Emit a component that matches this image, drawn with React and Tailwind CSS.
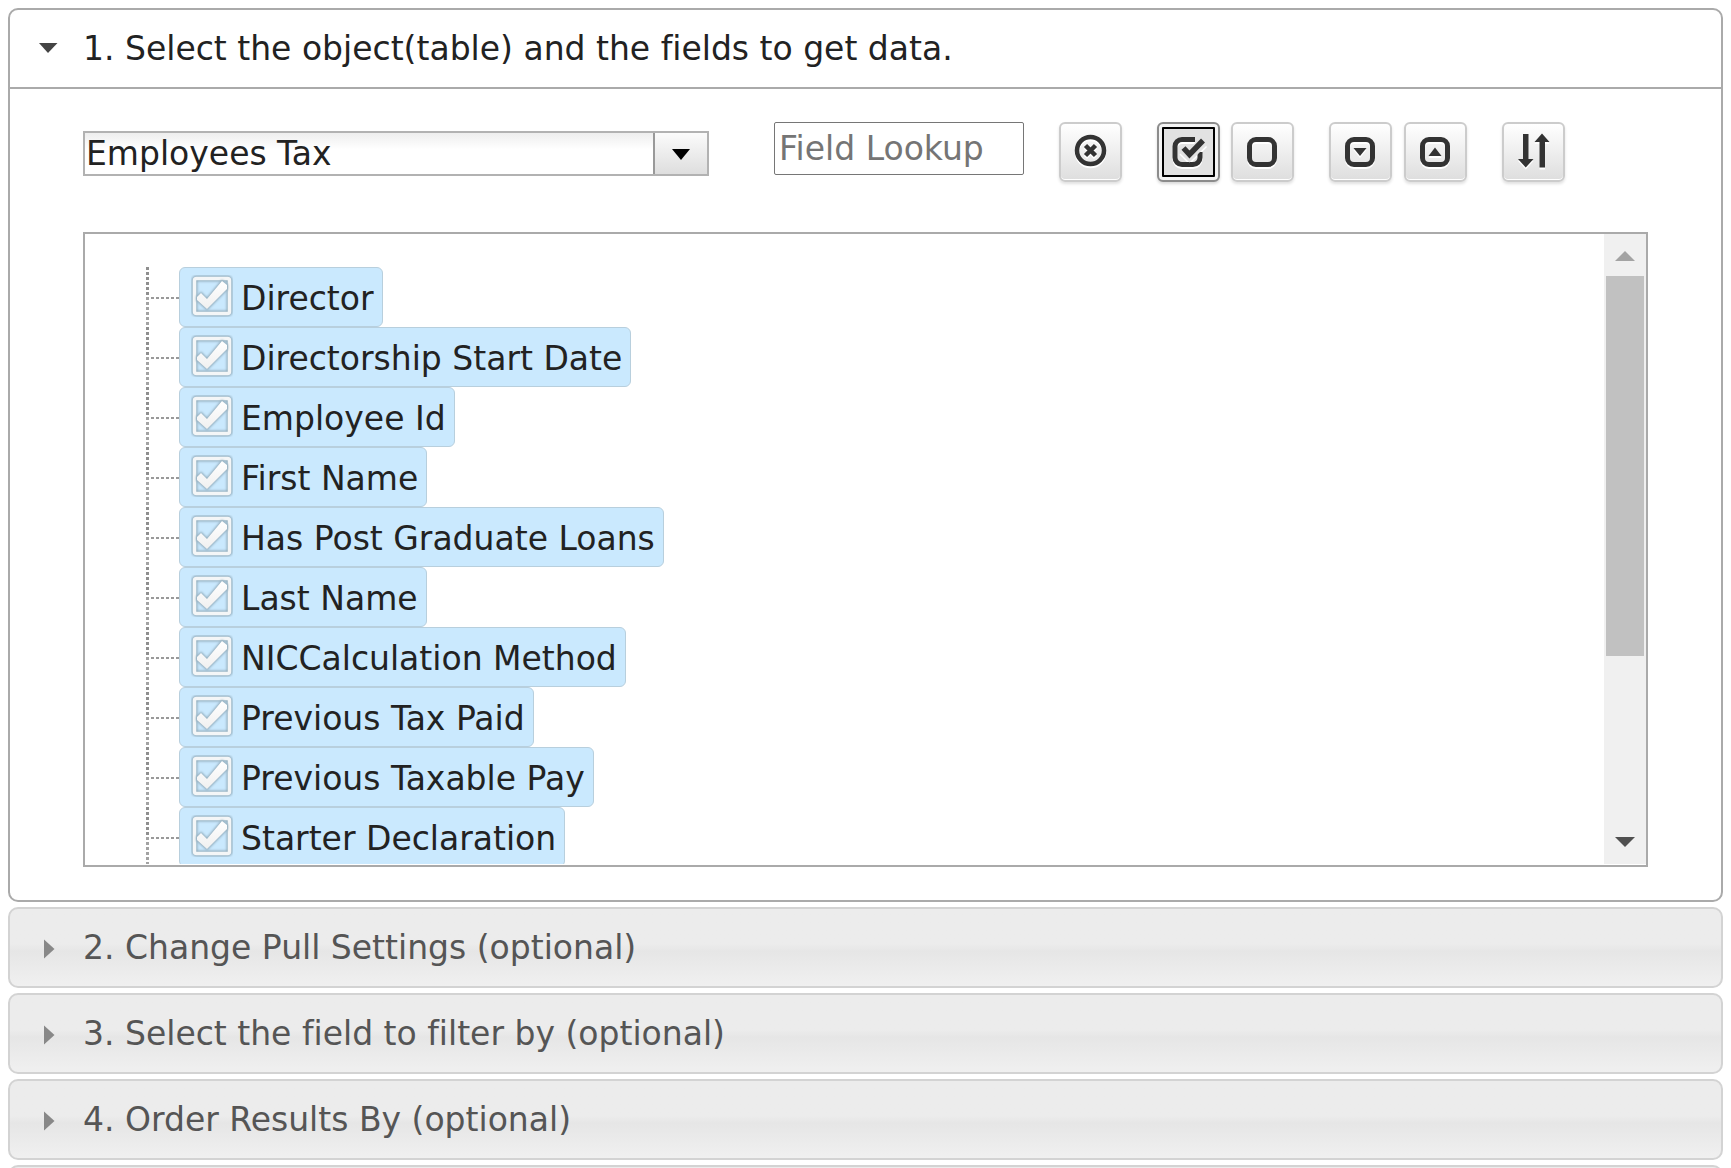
import React, { useState } from 'react';

const objects = ['Employees Tax'];

const fieldNames = [
  'Director',
  'Directorship Start Date',
  'Employee Id',
  'First Name',
  'Has Post Graduate Loans',
  'Last Name',
  'NICCalculation Method',
  'Previous Tax Paid',
  'Previous Taxable Pay',
  'Starter Declaration',
];

const optionalSteps = [
  '2. Change Pull Settings (optional)',
  '3. Select the field to filter by (optional)',
  '4. Order Results By (optional)',
];

const Icon = ({ children }) => (
  <svg
    viewBox="0 0 32 32"
    className="w-8 h-8 shrink-0 overflow-visible text-[#333333] drop-shadow-[0_2px_0_#ffffff]"
    fill="none"
    stroke="currentColor"
    strokeWidth="5"
    aria-hidden="true"
  >
    {children}
  </svg>
);

const ClearIcon = () => (
  <Icon>
    <circle cx="15.5" cy="14.5" r="13.5" strokeWidth="4.5" />
    <path d="M10.5 9.5l10 10M20.5 9.5l-10 10" strokeWidth="4.5" />
  </Icon>
);

const CheckAllIcon = () => (
  <Icon>
    <path d="M22 3.5H9a7 7 0 0 0-7 7v11a7 7 0 0 0 7 7h11a7 7 0 0 0 7-7V16" />
    <path d="M10 13l6.5 6.5L30.500 5.500" stroke="#e2e2e2" strokeWidth="10" />
    <path d="M10.500 12l6 6.500L30 4.500" strokeWidth="5.5" />
  </Icon>
);

const BoxIcon = ({ children }) => (
  <Icon>
    <rect x="2.5" y="3.5" width="25" height="25" rx="6.5" />
    {children}
  </Icon>
);

const SortIcon = () => (
  <Icon>
    <path
      d="M5 -2h5.500v25H15.500L7.750 31.500 0 23h5zM21.500 31.500V6h-5L24 -2.500 31.500 6H27v25.500z"
      fill="currentColor"
      stroke="none"
    />
  </Icon>
);

const ToolButton = ({ label, pressed, onClick, children }) => (
  <button
    type="button"
    aria-label={label}
    onClick={onClick}
    className={
      pressed
        ? 'flex items-center justify-center w-[63px] h-[60px] rounded-md border-2 border-[#8c8c8c] bg-[#e2e2e2] outline-2 -outline-offset-[7px] outline-black shadow-[0_2px_3px_rgba(0,0,0,0.15),inset_0_0_0_3px_#f4f4f4]'
        : 'flex items-center justify-center w-[63px] h-[60px] rounded-md border-2 border-[#cccccc] bg-linear-to-b from-white to-[#dedede] shadow-[0_2px_3px_rgba(0,0,0,0.12),inset_0_-1px_0_#ffffff]'
    }
  >
    {children}
  </button>
);

const CheckMark = ({ checked }) => (
  <svg viewBox="0 0 42 42" className="w-[42px] h-[42px]" aria-hidden="true">
    <defs>
      <linearGradient id="tick" x1="0" y1="0" x2="0" y2="1">
        <stop offset="0" stopColor="#ffffff" />
        <stop offset="1" stopColor="#f0f0f0" />
      </linearGradient>
      <filter id="soft" x="-10%" y="-10%" width="120%" height="120%">
        <feGaussianBlur stdDeviation="1" />
      </filter>
    </defs>
    <rect x="3.5" y="3.5" width="35" height="35" rx="2" fill="none" stroke="#93adbd" strokeWidth="6" filter="url(#soft)" />
    <rect x="3.5" y="3.5" width="35" height="35" rx="2" fill="none" stroke="#f4f6f7" strokeWidth="3.5" />
    {checked && (
      <>
        <path
          d="M6 22l4-4 6 6L31 6l5 4v4L16 34 6 25z"
          fill="#93adbd"
          stroke="#93adbd"
          strokeWidth="2"
          filter="url(#soft)"
        />
        <path d="M6 22l4-4 6 6L31 6l5 4v4L16 34 6 25z" fill="url(#tick)" />
      </>
    )}
  </svg>
);

const FieldRow = ({ name, checked, onToggle }) => (
  <li className="flex h-[60px]">
    {/* dotted tree connector */}
    <svg viewBox="0 0 33 60" className="w-[33px] h-[60px] shrink-0" aria-hidden="true">
      <path d="M1.500 0v30" stroke="#8f8f8f" strokeWidth="3" strokeDasharray="3 2" />
      <path d="M1.500 30v30" stroke="#a3a3a3" strokeWidth="3" strokeDasharray="3 2" />
      <path d="M5 31h28" stroke="#999999" strokeWidth="2" strokeDasharray="3 2" />
    </svg>
    <label className="flex items-center h-[60px] pl-[11px] pr-2 pt-0.5 rounded-md border border-[#b8cfdd] bg-[#cae9fe] whitespace-nowrap">
      <span className="relative mr-2 mb-1">
        <CheckMark checked={checked} />
        <input
          type="checkbox"
          checked={checked}
          onChange={onToggle}
          className="absolute inset-0 appearance-none cursor-pointer"
        />
      </span>
      {name}
    </label>
  </li>
);

const StepHeader = ({ title }) => (
  <h3>
    <button
      type="button"
      aria-expanded="false"
      className="flex items-center w-full h-[81px] pl-[22px] rounded-[10px] border-2 border-[#d3d3d3] bg-linear-to-b from-[#ececec] via-[#e6e6e6] to-[#f0f0f0] from-45% via-55% text-[#555555] text-left"
    >
      <svg viewBox="0 0 32 32" className="w-8 h-8 mr-[19px] mt-0.5" fill="#888888" aria-hidden="true">
        <path d="M12 6.500l10.500 9.500L12 25.500z" />
      </svg>
      {title}
    </button>
  </h3>
);

const App = () => {
  const [selectedObject, setSelectedObject] = useState(objects[0]);
  const [lookup, setLookup] = useState('');
  const [checkedFields, setCheckedFields] = useState(fieldNames);

  const toggleField = (name) => {
    setCheckedFields((prev) =>
      prev.includes(name) ? prev.filter((f) => f !== name) : [...prev, name]
    );
  };

  const visibleFields = fieldNames.filter((name) =>
    name.toLowerCase().includes(lookup.toLowerCase())
  );

  return (
    <main className="h-screen overflow-hidden bg-white p-2 flex flex-col gap-[5px] text-[33px] leading-[41px] text-[#222222] font-['Verdana','DejaVu_Sans',sans-serif] [font-variant-ligatures:none]">
      <section className="shrink-0 rounded-[10px] border-2 border-[#aaaaaa] bg-white">
        <h3>
          <button
            type="button"
            aria-expanded="true"
            className="flex items-center w-full h-[79px] pl-[22px] border-b-2 border-[#aaaaaa] text-left"
          >
            <svg viewBox="0 0 32 32" className="w-8 h-8 mr-[19px]" fill="#444444" aria-hidden="true">
              <path d="M7 10h18.500L16 20z" />
            </svg>
            1. Select the object(table) and the fields to get data.
          </button>
        </h3>

        <div className="px-[73px] py-[33px]">
          {/* Object picker, lookup and tree actions */}
          <div className="flex items-start mb-[50px]">
            <div className="flex w-2/5 h-[45px] mt-[9px] mr-[65px] border-2 border-[#b2b2b2]">
              <select
                aria-label="Object"
                value={selectedObject}
                onChange={(e) => setSelectedObject(e.target.value)}
                className="flex-1 min-w-0 appearance-none pl-px bg-linear-to-b from-[#eeeeee] to-white to-40%"
              >
                {objects.map((name) => (
                  <option key={name}>{name}</option>
                ))}
              </select>
              <span className="flex items-center justify-center w-[54px] border-l-2 border-[#999999] bg-linear-to-b from-[#fbfbfb] to-[#dedede]">
                <svg viewBox="0 0 18 12" className="w-[18px] h-3" aria-hidden="true">
                  <path d="M0 1h18L9 12z" />
                </svg>
              </span>
            </div>

            <input
              type="text"
              aria-label="Field Lookup"
              placeholder="Field Lookup"
              value={lookup}
              onChange={(e) => setLookup(e.target.value)}
              className="w-[250px] h-[53px] mr-[35px] px-1 border border-[#767676] rounded-xs placeholder:text-[#757575]"
            />

            <div className="flex gap-[35px]">
              <ToolButton label="Clear lookup" onClick={() => setLookup('')}>
                <ClearIcon />
              </ToolButton>
              <div className="flex gap-[11px]">
                <ToolButton label="Check all" pressed onClick={() => setCheckedFields(fieldNames)}>
                  <CheckAllIcon />
                </ToolButton>
                <ToolButton label="Uncheck all" onClick={() => setCheckedFields([])}>
                  <BoxIcon />
                </ToolButton>
              </div>
              <div className="flex gap-[12px]">
                <ToolButton label="Expand all">
                  <BoxIcon>
                    <path d="M8.500 12h13L15 20z" fill="currentColor" stroke="none" />
                  </BoxIcon>
                </ToolButton>
                <ToolButton label="Collapse all">
                  <BoxIcon>
                    <path d="M8.500 20h13L15 11.500z" fill="currentColor" stroke="none" />
                  </BoxIcon>
                </ToolButton>
              </div>
              <ToolButton label="Sort">
                <SortIcon />
              </ToolButton>
            </div>
          </div>

          {/* Field tree */}
          <div className="flex h-[635px] border-2 border-[#aaaaaa] pb-px">
            <ul className="flex-1 pl-[61px] pt-[33px] overflow-hidden">
              {visibleFields.map((name) => (
                <FieldRow
                  key={name}
                  name={name}
                  checked={checkedFields.includes(name)}
                  onToggle={() => toggleField(name)}
                />
              ))}
            </ul>
            <div className="flex flex-col w-[42px] px-0.5 bg-[#f0f0f0]" aria-hidden="true">
              <svg viewBox="0 0 38 42" className="w-full h-[42px]" fill="#a3a3a3">
                <path d="M9 27h20L19 17z" />
              </svg>
              <div className="h-[380px] bg-[#c1c1c1]" />
              <svg viewBox="0 0 38 42" className="w-full h-[42px] mt-auto" fill="#505050">
                <path d="M9 15h20L19 25z" />
              </svg>
            </div>
          </div>
        </div>
      </section>

      {optionalSteps.map((title) => (
        <StepHeader key={title} title={title} />
      ))}
      <div className="shrink-0 h-[81px] rounded-[10px] border-2 border-[#d3d3d3] bg-[#ececec]" />
    </main>
  );
};

export default App;
